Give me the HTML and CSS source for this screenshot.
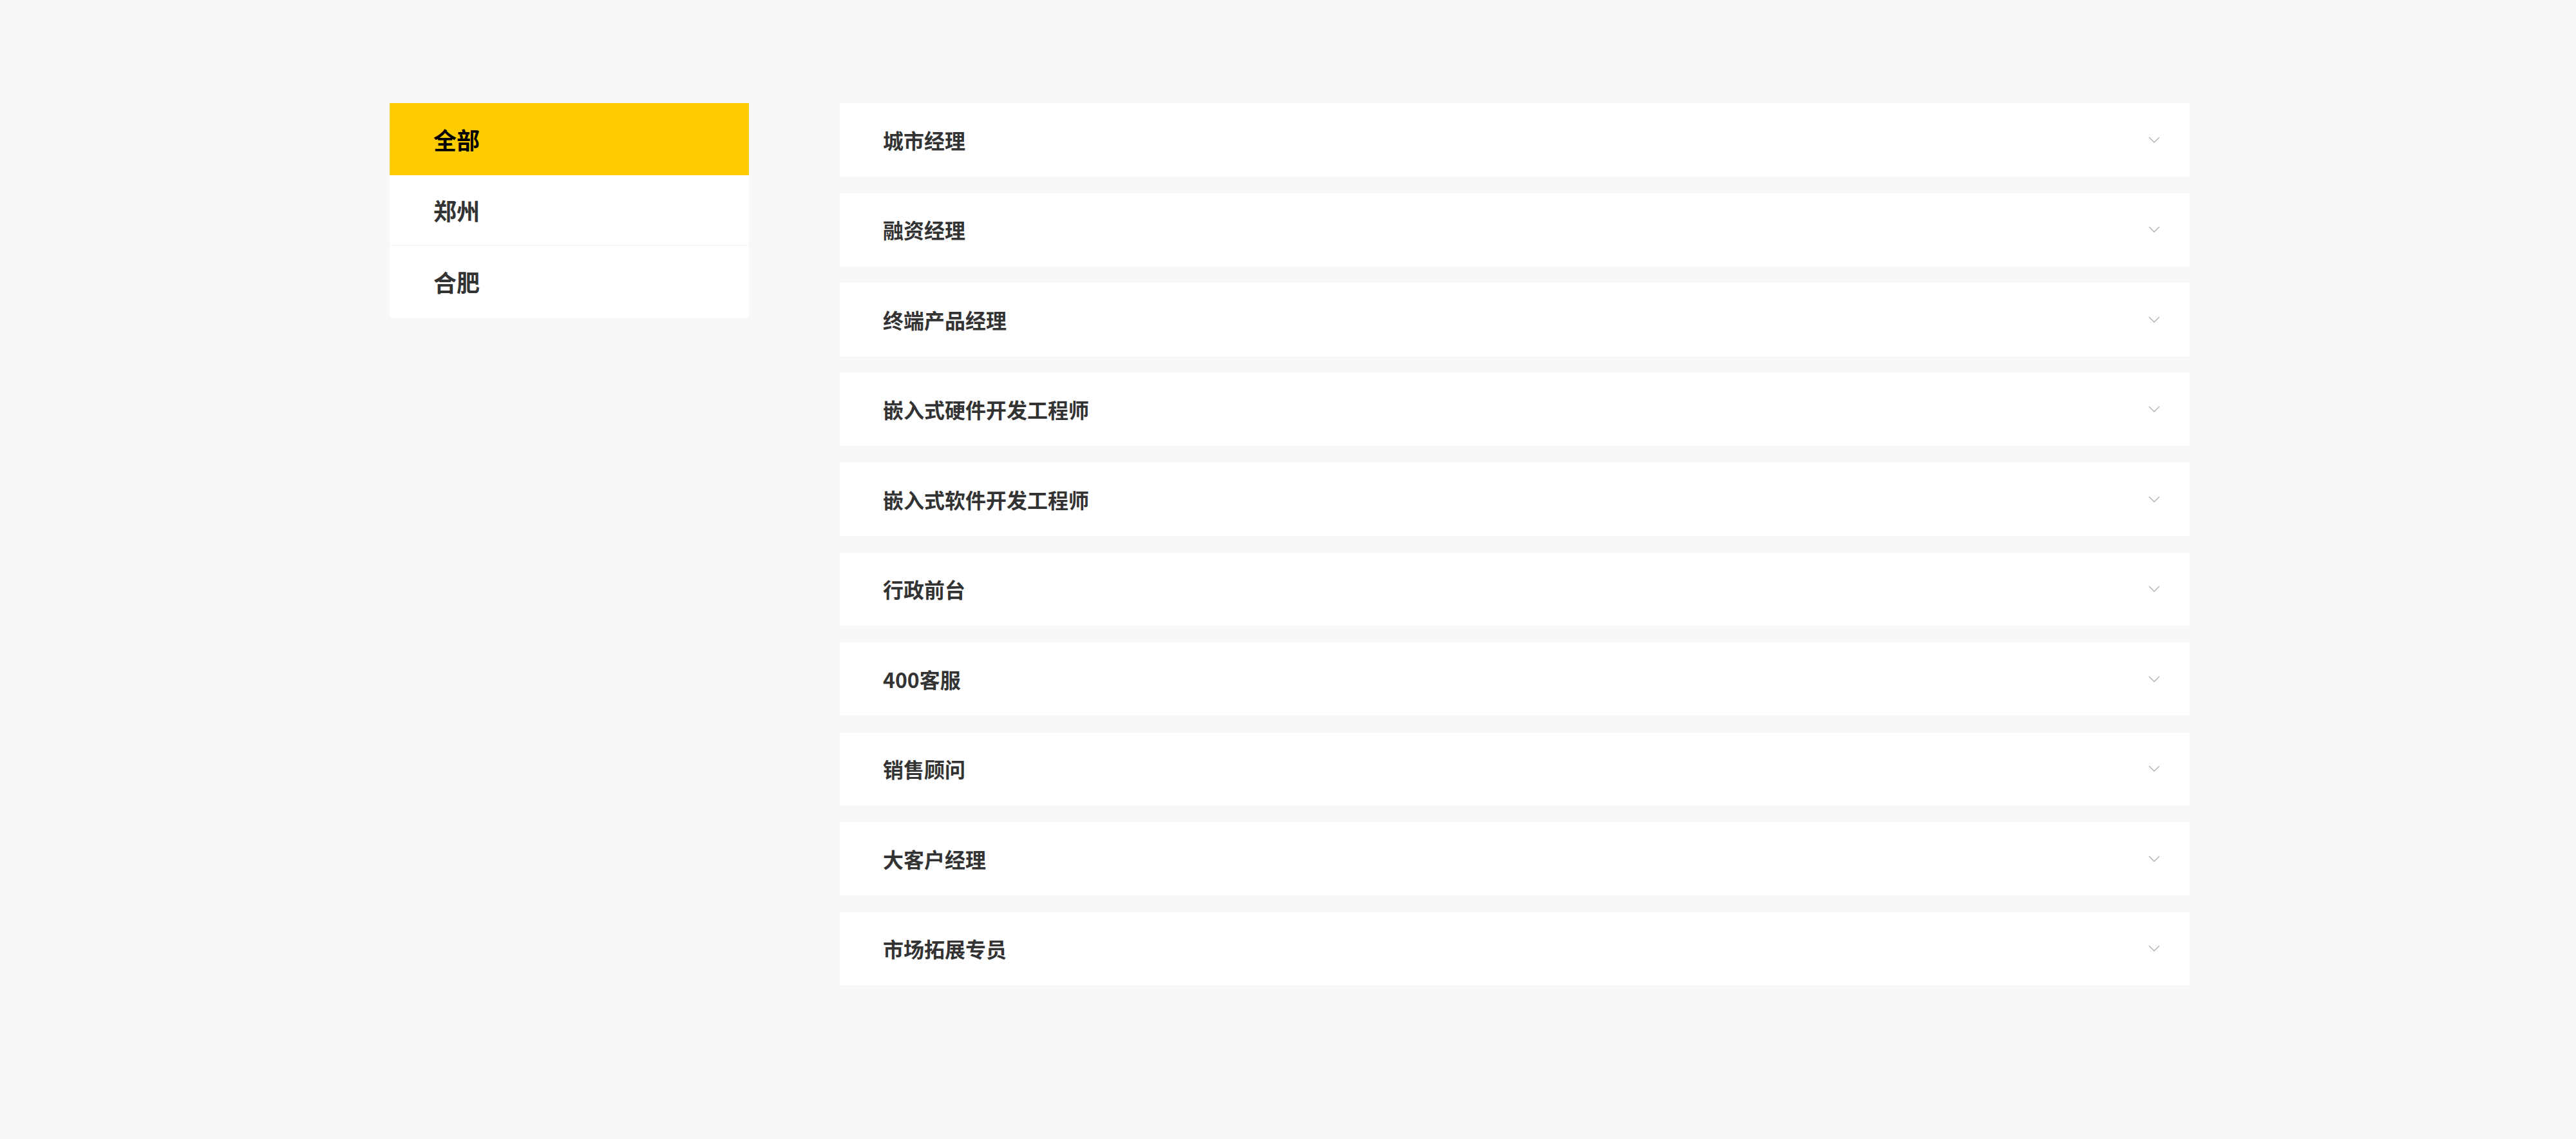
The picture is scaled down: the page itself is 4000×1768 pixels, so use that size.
FILE: index.html
```html
<!DOCTYPE html>
<html lang="zh-CN">
<head>
  <meta charset="UTF-8">
  <meta name="viewport" content="width=device-width, initial-scale=1.0">
  <title>招聘职位</title>
  <link rel="stylesheet" href="styles.css">
</head>
<body>
  <div class="container">
    <ul class="city-list">
      <li class="city active">全部</li>
      <li class="city">郑州</li>
      <li class="city">合肥</li>
    </ul>

    <ul class="job-list">
      <li class="job"><span class="job-name">城市经理</span><svg class="arrow" viewBox="0 0 18 10"><polyline points="1,1 9,9 17,1"/></svg></li>
      <li class="job"><span class="job-name">融资经理</span><svg class="arrow" viewBox="0 0 18 10"><polyline points="1,1 9,9 17,1"/></svg></li>
      <li class="job"><span class="job-name">终端产品经理</span><svg class="arrow" viewBox="0 0 18 10"><polyline points="1,1 9,9 17,1"/></svg></li>
      <li class="job"><span class="job-name">嵌入式硬件开发工程师</span><svg class="arrow" viewBox="0 0 18 10"><polyline points="1,1 9,9 17,1"/></svg></li>
      <li class="job"><span class="job-name">嵌入式软件开发工程师</span><svg class="arrow" viewBox="0 0 18 10"><polyline points="1,1 9,9 17,1"/></svg></li>
      <li class="job"><span class="job-name">行政前台</span><svg class="arrow" viewBox="0 0 18 10"><polyline points="1,1 9,9 17,1"/></svg></li>
      <li class="job"><span class="job-name">400客服</span><svg class="arrow" viewBox="0 0 18 10"><polyline points="1,1 9,9 17,1"/></svg></li>
      <li class="job"><span class="job-name">销售顾问</span><svg class="arrow" viewBox="0 0 18 10"><polyline points="1,1 9,9 17,1"/></svg></li>
      <li class="job"><span class="job-name">大客户经理</span><svg class="arrow" viewBox="0 0 18 10"><polyline points="1,1 9,9 17,1"/></svg></li>
      <li class="job"><span class="job-name">市场拓展专员</span><svg class="arrow" viewBox="0 0 18 10"><polyline points="1,1 9,9 17,1"/></svg></li>
    </ul>
  </div>
</body>
</html>
```

FILE: styles.css
```css
body {
  margin: 0;
  padding: 0;
  background-color: #f8f8f8;
  font-family: "Noto Sans CJK SC", "Noto Sans", sans-serif;
}

ul {
  list-style: none;
  margin: 0;
  padding: 0;
}

.container {
  display: flex;
  align-items: flex-start;
  gap: 141px;
  padding: 160px 0 0 605px;
}

.city-list {
  width: 558px;
  background: #fff;
}

.city {
  display: flex;
  align-items: center;
  height: 108px;
  padding: 0 68px;
  border-bottom: 1px solid #f3f3f3;
  font-size: 36px;
  font-weight: 700;
  color: #333;
  cursor: pointer;
}

.city:last-child {
  height: 112px;
  border-bottom: none;
}

.city.active {
  height: 112px;
  border-bottom: none;
  background-color: #ffcc00;
  color: #000;
}

.job-list {
  width: 2096px;
  display: flex;
  flex-direction: column;
  gap: 26px;
}

.job {
  display: flex;
  align-items: center;
  justify-content: space-between;
  height: 113.5px;
  padding: 0 46px 0 67px;
  background: #fff;
  cursor: pointer;
}

.job-name {
  font-size: 32px;
  font-weight: 700;
  color: #333;
}

.arrow {
  width: 18px;
  height: 10px;
  fill: none;
  stroke: #b5b5b5;
  stroke-width: 1.5;
}
```
